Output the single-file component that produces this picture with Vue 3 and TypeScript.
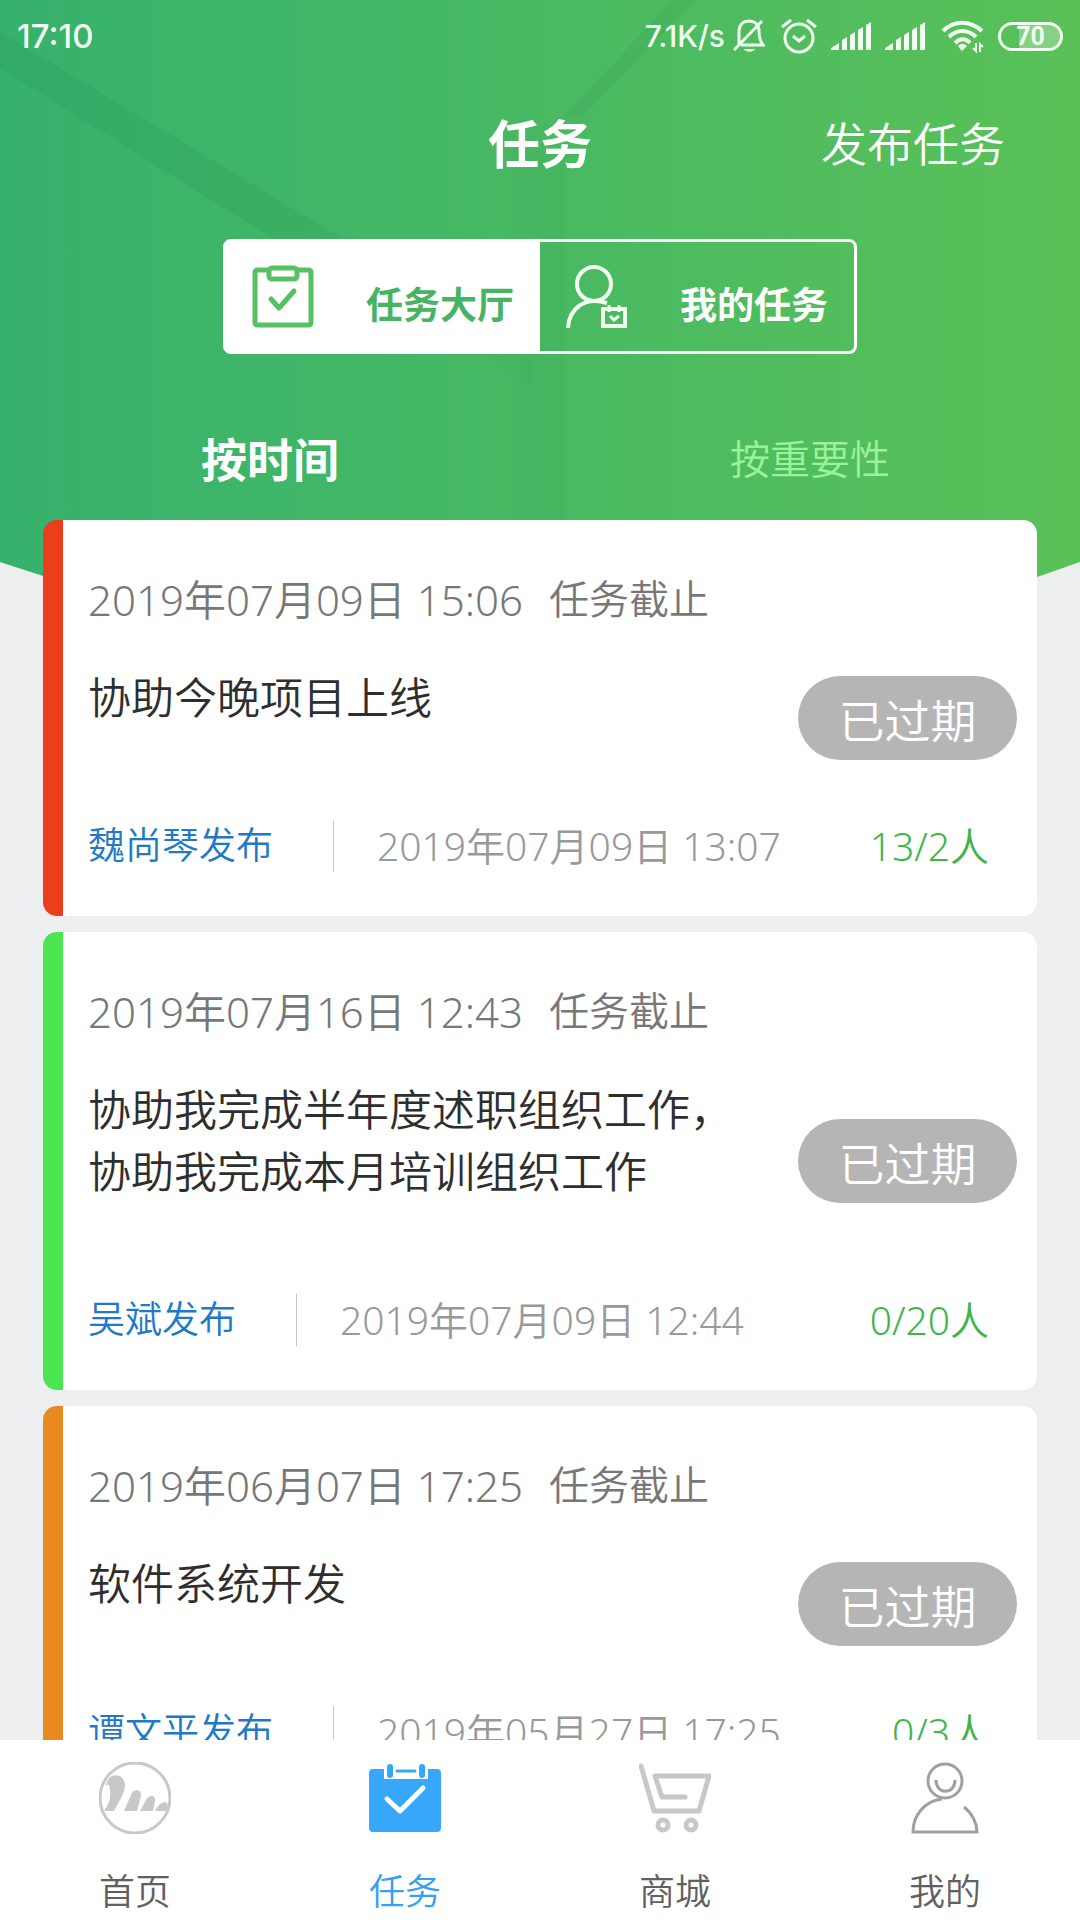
<script setup lang="ts">
import { ref } from 'vue'

interface Task {
  id: number
  color: string
  deadline: string
  lines: string[]
  publisher: string
  published: string
  count: string
}

const tasks: Task[] = [
  {
    id: 1,
    color: '#ea3e1c',
    deadline: '2019年07月09日 15:06',
    lines: ['协助今晚项目上线'],
    publisher: '魏尚琴发布',
    published: '2019年07月09日 13:07',
    count: '13/2人',
  },
  {
    id: 2,
    color: '#4be552',
    deadline: '2019年07月16日 12:43',
    lines: ['协助我完成半年度述职组织工作，', '协助我完成本月培训组织工作'],
    publisher: '吴斌发布',
    published: '2019年07月09日 12:44',
    count: '0/20人',
  },
  {
    id: 3,
    color: '#e88a20',
    deadline: '2019年06月07日 17:25',
    lines: ['软件系统开发'],
    publisher: '谭文平发布',
    published: '2019年05月27日 17:25',
    count: '0/3人',
  },
]

const scope = ref<'hall' | 'mine'>('hall')
const sort = ref<'time' | 'weight'>('time')
</script>

<template>
  <div class="app">
    <svg class="backdrop" viewBox="0 0 1080 740" preserveAspectRatio="none" aria-hidden="true">
      <defs>
        <linearGradient id="green" x1="0" x2="1" y1="0" y2="0">
          <stop offset="0" stop-color="#36b16d" />
          <stop offset="0.5" stop-color="#48b962" />
          <stop offset="1" stop-color="#5ac158" />
        </linearGradient>
        <linearGradient id="ray" x1="0" x2="1" y1="0" y2="0">
          <stop offset="0" stop-color="#1c7a48" stop-opacity="0.12" />
          <stop offset="0.6" stop-color="#1c7a48" stop-opacity="0.12" />
          <stop offset="1" stop-color="#1c7a48" stop-opacity="0.03" />
        </linearGradient>
        <linearGradient id="fold" x1="0" x2="1" y1="0" y2="0">
          <stop offset="0" stop-color="#1c7a48" stop-opacity="0" />
          <stop offset="0.5" stop-color="#1c7a48" stop-opacity="0.06" />
          <stop offset="1" stop-color="#1c7a48" stop-opacity="0.06" />
        </linearGradient>
      </defs>
      <path d="M0 0H1080V562L1037 577L540 735L43 576L0 562Z" fill="url(#green)" />
      <path d="M0 32L345 240L532 352V390L480 354L275 240L0 68Z" fill="url(#ray)" />
      <path d="M672 0H696L580 118L565 116Z" fill="#1c7a48" opacity="0.1" />
      <rect x="500" y="150" width="65" height="380" fill="url(#fold)" />
    </svg>

    <div class="status">
      <span class="clock">17:10</span>
      <span class="speed">7.1K/s</span>
      <svg class="bell" width="32" height="34" viewBox="0 0 32 34" fill="none" stroke="#effff0" stroke-width="3">
        <path d="M6 25V12C6 6 10 2 16 2C22 2 26 6 26 12C26 18 27 22 30 26H8M29 2L1 31" />
        <path d="M11 30H22C20 33.500 13 33.500 11 30Z" fill="#effff0" stroke="none" />
      </svg>
      <svg class="alarm" width="36" height="36" viewBox="0 0 36 36" fill="none" stroke="#effff0" stroke-width="3">
        <circle cx="18" cy="20" r="14" />
        <path d="M12 18L18 23L24 18M1 9L10 2M26 2L35 9" />
      </svg>
      <svg v-for="n in 2" :key="n" class="signal" width="40" height="30" viewBox="0 0 40 30" fill="#effff0">
        <path d="M0 29V27L8 22V29ZM11 19L16 16V29H11ZM19 14L24 11V29H19ZM27 9L32 6V29H27ZM35 4L40 1V29H35Z" />
      </svg>
      <svg class="wifi" width="43" height="34" viewBox="0 0 43 34" fill="none" stroke="#effff0" stroke-width="4">
        <path d="M2 12C13 1 29 1 41 12M8 18C16 10 27 10 35 18M14 24C19 19 25 19 29 24" />
        <path d="M17 27C20 24 23 24 26 27L21 32Z" fill="#effff0" stroke="none" />
        <path d="M35 24V32L32 29M39 33V25L42 28" stroke-width="2" />
      </svg>
      <span class="battery">70</span>
    </div>

    <header class="titlebar">
      <h1>任务</h1>
      <button type="button" class="publish">发布任务</button>
    </header>

    <div class="segments">
      <button type="button" :class="{ on: scope === 'hall' }" @click="scope = 'hall'">
        <svg width="62" height="63" viewBox="0 0 62 63" fill="none" stroke="#58bf62" stroke-width="5" stroke-linecap="round" stroke-linejoin="round">
          <path d="M17 5H6Q3 5 3 8V57Q3 60 6 60H56Q59 60 59 57V8Q59 5 56 5H45" />
          <rect x="17" y="3" width="28" height="11" rx="3" />
          <path d="M19 34L27 43L42 26" />
        </svg>
        <span>任务大厅</span>
      </button>
      <button type="button" :class="{ on: scope === 'mine' }" @click="scope = 'mine'">
        <svg width="62" height="63" viewBox="0 0 62 63" fill="none" stroke="#f2fff0" stroke-width="4">
          <circle cx="28" cy="19" r="17" />
          <path d="M2 63C3 44 18 31 41 38" />
          <path d="M37 44H59V61H37Z" />
          <path d="M43 40V47M53 40V47M44 51L48 55L53 51" stroke-width="3" />
        </svg>
        <span>我的任务</span>
      </button>
    </div>

    <div class="sorts">
      <button type="button" :class="{ on: sort === 'time' }" @click="sort = 'time'">按时间</button>
      <button type="button" :class="{ on: sort === 'weight' }" @click="sort = 'weight'">按重要性</button>
    </div>

    <main class="list">
      <article v-for="t in tasks" :key="t.id" class="card" :style="{ borderLeftColor: t.color }">
        <div class="content">
          <p class="deadline"><time>{{ t.deadline }}</time><span>任务截止</span></p>
          <h2><span v-for="line in t.lines" :key="line">{{ line }}</span></h2>
          <div class="foot">
            <a href="#">{{ t.publisher }}</a>
            <time>{{ t.published }}</time>
            <span class="count">{{ t.count }}</span>
          </div>
        </div>
        <button type="button" class="badge">已过期</button>
      </article>
    </main>

    <nav class="tabs">
      <a href="#">
        <svg width="72" height="72" viewBox="0 0 72 72" fill="#c8c8c8">
          <circle cx="36" cy="36" r="35" fill="none" stroke="#c8c8c8" stroke-width="3" />
          <path d="M8 20C11 12 19 12 23 16C28 21 26 29 22 36C19 42 17 45 15 49H5C10 42 12 36 11 29C11 23 10 21 6 24Z" />
          <path d="M25 49L32 33C34 26 43 27 42 34L38 49Z" />
          <path d="M41 49L47 38C50 32 57 33 56 39L54 49Z" />
          <path d="M56 49C60 41 67 37 69 43L67 49Z" />
        </svg>
        <span>首页</span>
      </a>
      <a href="#" class="on" aria-current="page">
        <svg width="72" height="72" viewBox="0 -2 72 72">
          <path d="M4 5H15V15H59V5H68Q72 5 72 9V64Q72 68 68 68H4Q0 68 0 64V9Q0 5 4 5Z" fill="#37a7fb" />
          <path d="M21 3V11M53 3V11" stroke="#37a7fb" stroke-width="6" stroke-linecap="round" />
          <path d="M28 7H46" stroke="#37a7fb" stroke-width="3" stroke-linecap="round" />
          <path d="M18 35L31 47L54 24" fill="none" stroke="#fff" stroke-width="5" stroke-linecap="round" stroke-linejoin="round" />
        </svg>
        <span>任务</span>
      </a>
      <a href="#">
        <svg width="72" height="72" viewBox="0 -2 72 72" fill="none" stroke="#c8c8c8" stroke-width="5" stroke-linecap="round" stroke-linejoin="round">
          <path d="M2 2L15 47H60L70 12H16L23 33H46" />
          <circle cx="24" cy="61" r="5" />
          <circle cx="52" cy="61" r="5" />
        </svg>
        <span>商城</span>
      </a>
      <a href="#">
        <svg width="68" height="72" viewBox="0 0 68 72" fill="none" stroke="#a0a0a0" stroke-width="3">
          <circle cx="34" cy="19" r="17" />
          <path d="M25 18C25 33 44 33 44 18" />
          <path d="M31 37C13 39 2 54 2 70H66C66 61 61 51 53 45" />
        </svg>
        <span>我的</span>
      </a>
    </nav>
  </div>
</template>

<style>
body {
  margin: 0;
  background: #eceef0;
}
</style>

<style scoped>
.app {
  position: relative;
  display: flex;
  flex-direction: column;
  height: 100vh;
  overflow: hidden;
  background: #eceef0;
  font-family: Inter, "Noto Sans CJK SC", sans-serif;
  font-weight: 350;
}

.backdrop {
  position: absolute;
  top: 0;
  left: 0;
  width: 100%;
  height: 740px;
}

.app > :not(.backdrop) {
  position: relative;
  flex-shrink: 0;
}

button {
  margin: 0;
  padding: 0;
  border: 0;
  background: none;
  color: #fff;
  font: inherit;
}

a {
  text-decoration: none;
}

.status {
  display: flex;
  align-items: center;
  height: 72px;
  padding: 0 17px;
  color: #effff0;
}

.clock {
  flex: 1;
  font-size: 33px;
  font-weight: 500;
}

.speed {
  margin-right: 8px;
  font-size: 30px;
  font-weight: 500;
}

.bell {
  margin-right: 16px;
}

.alarm,
.signal {
  margin-right: 14px;
}

.wifi {
  margin: 0 14px 0 2px;
}

.battery {
  box-sizing: border-box;
  width: 65px;
  height: 29px;
  border: 3px solid #effff0;
  border-radius: 15px;
  background: linear-gradient(90deg, transparent 30%, #ffffff44 30%);
  font-family: Roboto, sans-serif;
  font-size: 25px;
  font-weight: 700;
  line-height: 24px;
  text-align: center;
}

.titlebar {
  display: grid;
  grid-template-columns: 1fr auto 1fr;
  align-items: center;
  height: 138px;
  padding: 0 75px;
}

h1 {
  grid-column: 2;
  margin: 0;
  color: #fff;
  font-size: 52px;
  font-weight: 700;
}

.publish {
  justify-self: end;
  font-size: 46px;
}

.segments {
  display: flex;
  align-self: center;
  box-sizing: border-box;
  height: 115px;
  margin-top: 29px;
  border: 3px solid #fff;
  border-radius: 8px;
}

.segments button {
  display: flex;
  align-items: center;
  gap: 52px;
  padding: 0 26px;
  font-size: 37px;
  font-weight: 700;
}

.segments span {
  padding-top: 12px;
}

.segments .on {
  background: #fff;
  color: #48b463;
}

.sorts {
  display: flex;
  padding: 61px 0 21px;
}

.sorts button {
  flex: 1;
  height: 84px;
  color: #9cf29a;
  font-size: 40px;
}

.sorts .on {
  color: #fff;
  font-size: 46px;
  font-weight: 700;
}

.app > .list {
  display: flex;
  flex: 1 1 0;
  flex-direction: column;
  gap: 16px;
  min-height: 0;
  padding: 0 43px;
  overflow: hidden;
}

.card {
  display: grid;
  flex-shrink: 0;
  align-items: center;
  border-left: 20px solid;
  border-radius: 14px;
  background: #fff;
}

.content,
.badge {
  grid-area: 1 / 1;
}

.content {
  padding: 50px 48px 44px 25px;
}

.deadline {
  display: flex;
  gap: 26px;
  margin: 0;
  color: #777;
  font-size: 40px;
  line-height: 60px;
}

time,
.count {
  font-family: "Noto Sans", "Noto Sans CJK SC", sans-serif;
}

.deadline time {
  font-size: 42px;
}

h2 {
  margin: 37px 0 91px;
  color: #2e2e2e;
  font-size: 43px;
  font-weight: 350;
  line-height: 62px;
}

h2 span {
  display: block;
}

.foot {
  display: flex;
  font-size: 37px;
  line-height: 52px;
}

.foot time,
.count {
  font-size: 39px;
}

.foot a {
  color: #2079c7;
}

.foot time {
  margin-left: 60px;
  padding-left: 43px;
  border-left: 1px solid #c8c8c8;
  color: #999;
}

.count {
  margin-left: auto;
  color: #3fb549;
}

.badge {
  justify-self: end;
  width: 219px;
  height: 84px;
  margin-right: 20px;
  border-radius: 42px;
  background: #b5b5b5;
  font-size: 46px;
}

.tabs {
  display: flex;
  height: 180px;
  background: #fff;
}

.tabs a {
  display: flex;
  flex: 1;
  flex-direction: column;
  align-items: center;
  gap: 32px;
  padding-top: 22px;
  color: #606060;
  font-size: 36px;
  line-height: 52px;
}

.tabs .on {
  color: #37a0f0;
}
</style>
